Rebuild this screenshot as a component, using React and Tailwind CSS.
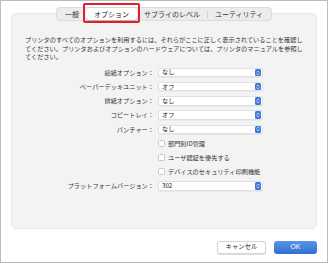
import { useState } from 'react';

const font = { fontFamily: '"Noto Sans CJK JP", "Noto Sans", sans-serif' };

const tabs = ['一般', 'オプション', 'サプライのレベル', 'ユーティリティ'];

function Stepper() {
  return (
    <div className="w-[6px] h-[7.5px] rounded-[1.5px] bg-[#3d7ad6] flex items-center justify-center">
      <svg width="4" height="6" viewBox="0 0 4 6" fill="none" stroke="white" strokeWidth="0.8" strokeLinecap="round" strokeLinejoin="round">
        <path d="M1 2.2 L2 1.2 L3 2.2" />
        <path d="M1 3.8 L2 4.8 L3 3.8" />
      </svg>
    </div>
  );
}

function SelectRow({ label, value }) {
  return (
    <div className="h-[14.2px] flex items-center">
      <div className="w-[142px] text-right text-[6.2px] text-[#333] whitespace-nowrap">{label}：</div>
      <div className="ml-[4px] w-[105px] h-[9.5px] bg-white border border-[#e0e0e0] rounded-[2px] flex items-center justify-between pl-[3px] pr-[1px] shadow-[0_0.5px_0.5px_rgba(0,0,0,0.08)]">
        <span className="text-[6.2px] text-[#222] leading-none">{value}</span>
        <Stepper />
      </div>
    </div>
  );
}

function CheckRow({ label }) {
  return (
    <div className="h-[14.2px] flex items-center">
      <div className="w-[142px]" />
      <div className="ml-[4px] flex items-center gap-[3px]">
        <div className="w-[7px] h-[7px] bg-white border border-[#c6c6c6] rounded-[1.5px]" />
        <span className="text-[6.2px] text-[#333] whitespace-nowrap">{label}</span>
      </div>
    </div>
  );
}

export default function App() {
  const [active, setActive] = useState(1);

  return (
    <div className="w-[329px] h-[264px] bg-white" style={font}>
      <div className="w-[328px] h-[263px] border border-[#bcbcbc] bg-white flex flex-col px-[10px]">
        {/* Tabs */}
        <div className="relative z-10 mt-[6px] self-center">
          <div className="flex items-center h-[14px] bg-[#ececec] border border-[#dcdcdc] rounded-[4px] px-[1px]">
            {tabs.map((t, i) => (
              <div key={t} className="flex items-center">
                {i === 3 && <div className="w-px h-[7px] bg-[#cfcfcf]" />}
                <button
                  onClick={() => setActive(i)}
                  className={
                    i === active
                      ? 'relative h-[12px] px-[8px] bg-white rounded-[3px] shadow-[0_0.5px_1px_rgba(0,0,0,0.2)] text-[7px] text-[#222] flex items-center'
                      : 'h-[12px] px-[7px] text-[7px] text-[#333] flex items-center'
                  }
                >
                  {t}
                  {i === active && (
                    <span className="absolute -left-[3px] -right-[3px] -top-[5px] -bottom-[3px] border-2 border-[#e0202a] rounded-[2px]" />
                  )}
                </button>
              </div>
            ))}
          </div>
        </div>

        {/* Panel */}
        <div className="-mt-[8px] h-[216px] bg-[#f3f3f3] border border-[#e6e6e6] rounded-[5px] pt-[22px]">
          <p className="pl-[13px] text-[6.2px] leading-[8.7px] text-[#333] whitespace-nowrap">
            プリンタのすべてのオプションを利用するには、それらがここに正しく表示されていることを確認し
            <br />
            てください。プリンタおよびオプションのハードウェアについては、プリンタのマニュアルを参照し
            <br />
            てください。
          </p>
          <div className="mt-[3.3px]">
            <SelectRow label="給紙オプション" value="なし" />
            <SelectRow label="ペーパーデッキユニット" value="オフ" />
            <SelectRow label="排紙オプション" value="なし" />
            <SelectRow label="コピートレイ" value="オフ" />
            <SelectRow label="パンチャー" value="なし" />
            <CheckRow label="部門別ID管理" />
            <CheckRow label="ユーザ認証を優先する" />
            <CheckRow label="デバイスのセキュリティ印刷機能" />
            <SelectRow label="プラットフォームバージョン" value="302" />
          </div>
        </div>

        {/* Buttons */}
        <div className="mt-[12px] flex justify-end gap-[8px]">
          <button className="w-[49px] h-[12.5px] bg-white border border-[#d6d6d6] rounded-[3px] shadow-[0_0.5px_1px_rgba(0,0,0,0.15)] text-[6.4px] text-[#222] flex items-center justify-center">
            キャンセル
          </button>
          <button className="w-[43px] h-[12.5px] rounded-[3px] bg-gradient-to-b from-[#5a95e4] to-[#2f6fd0] text-[6.8px] text-white flex items-center justify-center" style={{ fontFamily: '"Liberation Sans", sans-serif' }}>
            OK
          </button>
        </div>
      </div>
    </div>
  );
}
